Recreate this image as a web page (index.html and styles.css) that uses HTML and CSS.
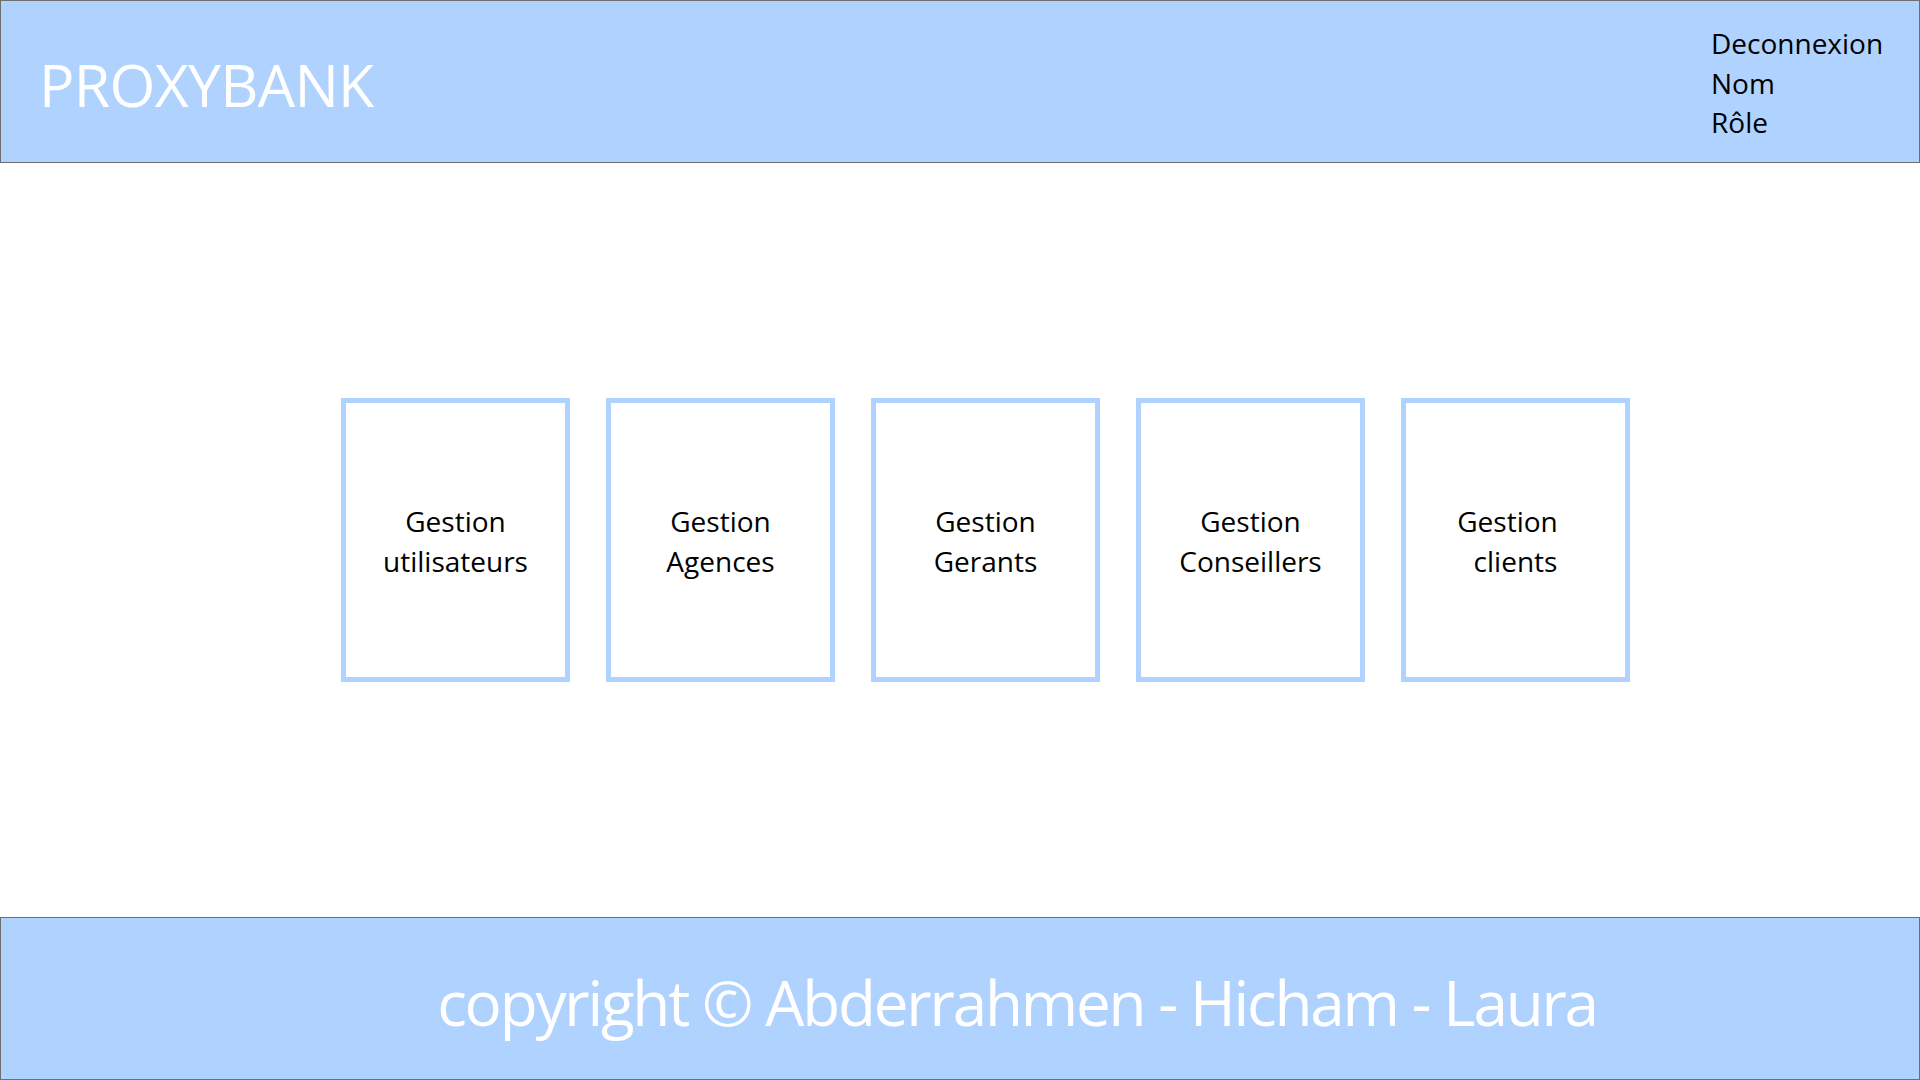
FILE: index.html
```html
<!DOCTYPE html>
<html lang="fr">
<head>
<meta charset="utf-8">
<title>ProxyBank</title>
<link rel="stylesheet" href="styles.css">
</head>
<body>
<div class="page">
  <header class="topbar">
    <div class="brand">PROXYBANK</div>
    <nav class="user-menu">
      <div class="user-line">Deconnexion</div>
      <div class="user-line">Nom</div>
      <div class="user-line">Rôle</div>
    </nav>
  </header>
  <main class="content">
    <div class="tiles">
      <div class="tile"><span>Gestion</span><span>utilisateurs</span></div>
      <div class="tile"><span>Gestion</span><span>Agences</span></div>
      <div class="tile"><span>Gestion</span><span>Gerants</span></div>
      <div class="tile"><span>Gestion</span><span>Conseillers</span></div>
      <div class="tile"><span class="shift">Gestion</span><span>clients</span></div>
    </div>
  </main>
  <footer class="bottombar">
    <div class="copyright">copyright © Abderrahmen - Hicham - Laura</div>
  </footer>
</div>
</body>
</html>
```
FILE: styles.css
```css
* { box-sizing: border-box; }
html, body { margin: 0; padding: 0; }
body {
  width: 1920px;
  height: 1080px;
  overflow: hidden;
  background: #ffffff;
  font-family: "Segoe UI", "Open Sans", "Noto Sans", sans-serif;
  color: #000;
}
.page {
  display: flex;
  flex-direction: column;
  height: 1080px;
}
.topbar {
  height: 163px;
  flex: none;
  background: #b0d2fe;
  border: 1px solid #6e6e6e;
  display: flex;
  align-items: center;
  justify-content: space-between;
  padding: 0 28px 0 38px;
}
.brand {
  color: #ffffff;
  font-size: 59px;
  letter-spacing: -0.7px;
  line-height: 1;
  margin-top: 6px;
}
.user-menu {
  width: 180px;
  display: flex;
  flex-direction: column;
  margin-top: 4px;
}
.user-line {
  font-size: 28px;
  line-height: 39.5px;
  letter-spacing: 0;
}
.content {
  flex: 1;
  display: flex;
  align-items: center;
}
.tiles {
  display: flex;
  gap: 36px;
  margin-left: 341px;
  margin-top: 4px;
}
.tile {
  width: 229px;
  height: 284px;
  border: 5px solid #b0d2fe;
  display: flex;
  flex-direction: column;
  align-items: center;
  justify-content: center;
  font-size: 28px;
  line-height: 40px;
  letter-spacing: 0;
  padding-top: 2px;
}
.tiles { margin-top: 0; }
.tile .shift { padding-right: 16px; }
.bottombar {
  height: 163px;
  flex: none;
  background: #b0d2fe;
  border: 1px solid #6e6e6e;
  display: flex;
  align-items: center;
  justify-content: center;
  padding-left: 114px;
}
.copyright {
  color: #ffffff;
  font-size: 62px;
  letter-spacing: -2.2px;
  line-height: 1;
  margin-top: 6px;
}
```
